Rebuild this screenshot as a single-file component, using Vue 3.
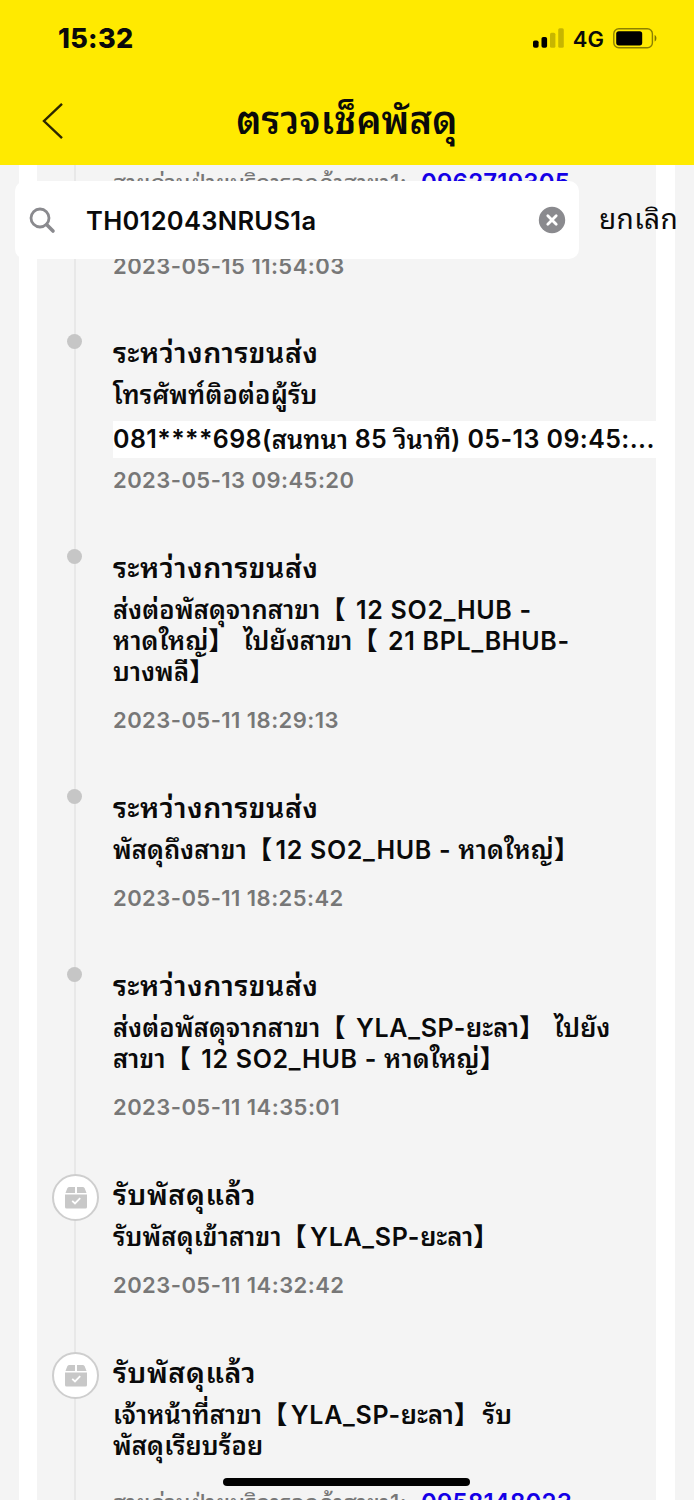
<template>
  <div class="screen">
    <header class="header">
      <div class="status-bar">
        <span class="clock">15:32</span>
        <div class="status-icons">
          <svg class="signal" width="31" height="20" viewBox="0 0 31 20">
            <rect x="0" y="12.5" width="5.6" height="7.2" rx="1.8" />
            <rect x="8.5" y="9" width="5.6" height="10.7" rx="1.8" />
            <rect x="17" y="4.8" width="5.4" height="15" rx="1.5" opacity="0.22" />
            <rect x="25.2" y="0.3" width="5.6" height="19.5" rx="1.5" opacity="0.22" />
          </svg>
          <span class="network">4G</span>
          <svg class="battery" width="45" height="21" viewBox="0 0 45 21">
            <rect x="0.8" y="0.8" width="38.6" height="19" rx="5" fill="none" stroke="#000" stroke-opacity="0.45" stroke-width="1.4" />
            <rect x="3.2" y="3.2" width="26" height="14.2" rx="2.6" />
            <path d="M41.6 7 C44 8 44 12.6 41.6 13.6 Z" opacity="0.5" />
          </svg>
        </div>
      </div>
      <div class="nav-bar">
        <svg class="back" width="22" height="38" viewBox="0 0 22 38">
          <path d="M20 1.8 L2 19 L20 36.2" fill="none" stroke="#2c2700" stroke-width="2.4" />
        </svg>
        <h1 class="title">ตรวจเช็คพัสดุ</h1>
      </div>
    </header>

    <main class="page">
      <div class="card">
        <div class="timeline">
          <div class="previous">
            <div class="hotline"><span class="hotline-label">สายด่วนฝ่ายบริการลูกค้าสาขา1:</span><a class="phone">0962719305</a></div>
            <div class="time">2023-05-15 11:54:03</div>
          </div>
          <div v-for="(item, index) in items" :key="index" class="item">
            <span v-if="!item.received" class="dot"></span>
            <span v-else class="badge">
              <svg width="24" height="24" viewBox="0 0 24 24">
                <path d="M5 1 H11 V7 H1.5 L3.2 2.5 Q3.8 1 5 1 Z M13 1 H19 Q20.2 1 20.8 2.5 L22.5 7 H13 Z M1 8.5 H23 V21 Q23 22.5 21.5 22.5 H2.5 Q1 22.5 1 21 Z" fill="#c8c8c8" />
                <path d="M8.2 14.8 L11 17.5 L16.2 12.2" fill="none" stroke="#fff" stroke-width="1.8" />
              </svg>
            </span>
            <h2 class="item-title">{{ item.title }}</h2>
            <div v-for="(line, i) in item.lines" :key="i" class="line">
              <span v-for="(run, j) in line" :key="j" :class="run[0]">{{ run[1] }}</span>
            </div>
            <div v-if="item.call" class="call">
              <span v-for="(run, j) in item.call" :key="j" :class="run[0]">{{ run[1] }}</span>
            </div>
            <div v-if="item.time" class="time" :class="{ tight: item.call }">{{ item.time }}</div>
            <div v-if="item.phone" class="hotline last"><span class="hotline-label">สายด่วนฝ่ายบริการลูกค้าสาขา1:</span><a class="phone">{{ item.phone }}</a></div>
          </div>
        </div>
      </div>
    </main>

    <div class="search-bar">
      <div class="search-box">
        <svg class="search-icon" width="27" height="27" viewBox="0 0 27 27">
          <circle cx="11" cy="11" r="9" fill="none" stroke="#8a8a8e" stroke-width="2.8" />
          <path d="M17.8 17.8 L24 24" stroke="#8a8a8e" stroke-width="3.6" stroke-linecap="round" />
        </svg>
        <span class="query">{{ query }}</span>
        <svg class="clear" width="28" height="28" viewBox="0 0 28 28" @click="query = ''">
          <circle cx="14" cy="14" r="13.2" fill="#8a8a8e" />
          <path d="M9.8 9.8 L18.2 18.2 M18.2 9.8 L9.8 18.2" stroke="#fff" stroke-width="2.8" stroke-linecap="round" />
        </svg>
      </div>
      <span class="cancel">ยกเลิก</span>
    </div>
    <div class="home-indicator"></div>
  </div>
</template>

<script setup>
import { ref } from "vue";

const query = ref("TH012043NRUS1a");

// th: Thai text, en: Latin text and digits, lb / rb: brackets
const items = [
  {
    title: "ระหว่างการขนส่ง",
    lines: [[["th", "โทรศัพท์ติอต่อผู้รับ"]]],
    call: [
      ["en", "081****698("],
      ["th", "สนทนา"],
      ["en", " 85 "],
      ["th", "วินาที"],
      ["en", ") 05-13 09:45:..."],
    ],
    time: "2023-05-13 09:45:20",
  },
  {
    title: "ระหว่างการขนส่ง",
    lines: [
      [["th", "ส่งต่อพัสดุจากสาขา"], ["lb", "【"], ["en", " 12 SO2_HUB -"]],
      [["th", "หาดใหญ่"], ["rb", "】"], ["th", " ไปยังสาขา"], ["lb", "【"], ["en", " 21 BPL_BHUB-"]],
      [["th", "บางพลี"], ["rb", "】"]],
    ],
    time: "2023-05-11 18:29:13",
  },
  {
    title: "ระหว่างการขนส่ง",
    lines: [
      [["th", "พัสดุถึงสาขา"], ["lb", "【"], ["en", "12 SO2_HUB - "], ["th", "หาดใหญ่"], ["rb", "】"]],
    ],
    time: "2023-05-11 18:25:42",
  },
  {
    title: "ระหว่างการขนส่ง",
    lines: [
      [["th", "ส่งต่อพัสดุจากสาขา"], ["lb", "【"], ["en", " YLA_SP-"], ["th", "ยะลา"], ["rb", "】"], ["th", " ไปยัง"]],
      [["th", "สาขา"], ["lb", "【"], ["en", " 12 SO2_HUB - "], ["th", "หาดใหญ่"], ["rb", "】"]],
    ],
    time: "2023-05-11 14:35:01",
  },
  {
    title: "รับพัสดุแล้ว",
    received: true,
    lines: [[["th", "รับพัสดุเข้าสาขา"], ["lb", "【"], ["en", "YLA_SP-"], ["th", "ยะลา"], ["rb", "】"]]],
    time: "2023-05-11 14:32:42",
  },
  {
    title: "รับพัสดุแล้ว",
    received: true,
    lines: [
      [["th", "เจ้าหน้าที่สาขา"], ["lb", "【"], ["en", "YLA_SP-"], ["th", "ยะลา"], ["rb", "】"], ["th", "รับ"]],
      [["th", "พัสดุเรียบร้อย"]],
    ],
    phone: "0958148023",
  },
];
</script>

<style>
body {
  margin: 0;
  background: #f4f4f4;
}
</style>

<style scoped>
.screen {
  position: relative;
  width: 694px;
  height: 1500px;
  overflow: hidden;
  background: #f4f4f4;
  color: #0a0a0a;
  font-family: Inter, "Noto Sans Thai Looped", Loma, Waree, "Noto Sans CJK SC", sans-serif;
}

.header {
  position: relative;
  z-index: 2;
  height: 165px;
  background: #ffea00;
}

.status-bar {
  display: flex;
  justify-content: space-between;
  align-items: center;
  height: 76px;
  padding: 0 36px 0 58px;
}

.clock {
  font-size: 27px;
  font-weight: 800;
  letter-spacing: 0.3px;
}

.status-icons {
  display: flex;
  align-items: center;
}

.network {
  margin: 1px 9px 0 9px;
  font-size: 22px;
  font-weight: 600;
}

.nav-bar {
  display: flex;
  align-items: center;
  height: 89px;
  padding: 0 42px;
}

.title {
  flex: 1;
  margin: 0 22px 8px 0;
  font-size: 38px;
  font-weight: 600;
  letter-spacing: 0.2px;
  text-align: center;
  white-space: nowrap;
}

.page {
  padding: 0 19px 0 19px;
}

.card {
  padding: 0 19px 0 18px;
  background: #fff;
}

.timeline {
  height: 1335px;
  padding-left: 76px;
  background: linear-gradient(#e8e8e8, #e8e8e8) 37px 0 / 2px 100% no-repeat #f4f4f4;
}

.previous {
  display: flex;
  flex-direction: column;
  justify-content: space-between;
  box-sizing: border-box;
  height: 161px;
  padding: 2px 0 44px;
}

.item {
  position: relative;
  white-space: nowrap;
}

.dot {
  position: absolute;
  left: -46px;
  top: 8px;
  width: 15px;
  height: 15px;
  border-radius: 50%;
  background: #c6c6c6;
}

.badge {
  position: absolute;
  left: -61px;
  top: 6px;
  display: flex;
  align-items: center;
  justify-content: center;
  box-sizing: border-box;
  width: 47px;
  height: 47px;
  border: 2px solid #cecece;
  border-radius: 50%;
  background: #fff;
}

.item-title {
  height: 54px;
  margin: 0;
  font-size: 28.5px;
  font-weight: 600;
  line-height: 54px;
  letter-spacing: 0.6px;
}

.line {
  display: flex;
  height: 31px;
  font-size: 25px;
  font-weight: 600;
  line-height: 30px;
  white-space: pre;
}

.line .th {
  font-size: 25.5px;
  letter-spacing: 0.15px;
}

.en {
  letter-spacing: 0.7px;
}

.lb,
.rb {
  width: 28.5px;
  font-weight: 900;
}

.call {
  display: flex;
  height: 37px;
  margin-top: 10px;
  background: #fff;
  font-size: 25px;
  font-weight: 600;
  line-height: 37px;
  white-space: pre;
}

.call .th {
  font-size: 25.5px;
}

.call .en {
  letter-spacing: 0.4px;
}

.time {
  height: 31px;
  margin: 17px 0 45px;
  color: #777;
  font-size: 22px;
  font-weight: 600;
  line-height: 31px;
  letter-spacing: 0.45px;
}

.time.tight {
  margin-top: 7px;
}

.previous .time {
  margin: 0;
}

.hotline {
  display: flex;
  height: 31px;
  color: #777;
  font-size: 22.5px;
  font-weight: 500;
  line-height: 31px;
  white-space: nowrap;
}

.hotline.last {
  margin-top: 25px;
}

.hotline-label {
  width: 308px;
  letter-spacing: 0.3px;
}

.phone {
  color: #1400e6;
  font-size: 24px;
  font-weight: 600;
  letter-spacing: 0.2px;
}

.search-bar {
  position: absolute;
  z-index: 3;
  top: 181px;
  left: 15px;
  display: flex;
  align-items: center;
}

.search-box {
  display: flex;
  align-items: center;
  box-sizing: border-box;
  width: 564px;
  height: 78px;
  padding: 0 13px 0 14px;
  border-radius: 10px;
  background: #fff;
}

.query {
  flex: 1;
  margin-left: 30px;
  font-size: 25.5px;
  font-weight: 600;
  letter-spacing: 0.3px;
}

.cancel {
  margin: 0 0 8px 20px;
  font-size: 28px;
  letter-spacing: 0.4px;
  white-space: nowrap;
}

.home-indicator {
  position: absolute;
  z-index: 3;
  left: 223px;
  top: 1478px;
  width: 247px;
  height: 8px;
  border-radius: 4px;
  background: #000;
}
</style>
